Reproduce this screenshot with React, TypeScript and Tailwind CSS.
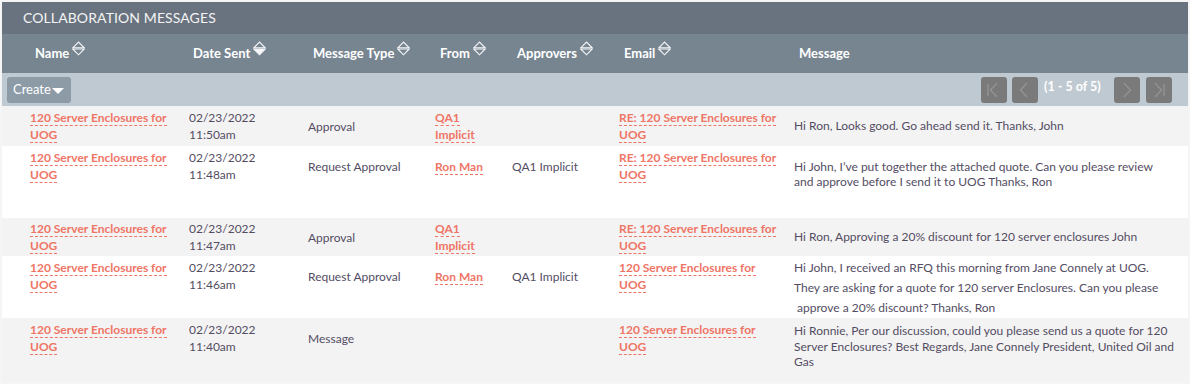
import React from "react";

const LINK = "text-[#ef7566] font-bold border-b border-dashed border-[#ef7566]";

function SortIcon({ desc }: { desc?: boolean }) {
  return (
    <svg
      width="13"
      height="15"
      viewBox="0 0 13 15"
      className="ml-[3px] mb-[10px] shrink-0"
      fill="none"
      stroke="#f4f6f8"
      strokeWidth="1.1"
    >
      <path d="M0.8 6.8 L6.5 1 L12.2 6.8 Z" />
      <path d="M0.8 8 L6.5 13.8 L12.2 8 Z" fill={desc ? "#f4f6f8" : "none"} />
    </svg>
  );
}

function Pager({ kind }: { kind: "first" | "prev" | "next" | "last" }) {
  const d = {
    first: "M7 7 V19 M16 6 L9.5 13 L16 20",
    prev: "M15 6 L8.5 13 L15 20",
    next: "M10 6 L16.5 13 L10 20",
    last: "M9 6 L15.5 13 L9 20 M18 7 V19",
  }[kind];
  return (
    <div className="w-[26px] h-[26px] rounded-[3px] bg-[#7a7a7a] flex items-center justify-center">
      <svg width="26" height="26" viewBox="0 0 26 26" fill="none" stroke="#939393" strokeWidth="1.4">
        <path d={d} />
      </svg>
    </div>
  );
}

function Link({ lines }: { lines: string[] }) {
  return (
    <span className={LINK}>
      {lines.map((l, i) => (
        <React.Fragment key={i}>
          {i > 0 && <br />}
          {l}
        </React.Fragment>
      ))}
    </span>
  );
}

type Row = {
  bg: string;
  h: string;
  box: string;
  time: string;
  type: string;
  from: string[];
  approvers: string;
  email: string[];
  msgCls: string;
  msg: string[];
};

const NAME = ["120 Server Enclosures for", "UOG"];

const rows: Row[] = [
  {
    bg: "bg-[#f3f3f3]",
    h: "h-[40px]",
    box: "h-[40px]",
    time: "11:50am",
    type: "Approval",
    from: ["QA1", "Implicit"],
    approvers: "",
    email: ["RE: 120 Server Enclosures for", "UOG"],
    msgCls: "h-[39px] flex items-center leading-[15px]",
    msg: ["Hi Ron, Looks good. Go ahead send it. Thanks, John"],
  },
  {
    bg: "bg-white",
    h: "h-[72px]",
    box: "h-[40px]",
    time: "11:48am",
    type: "Request Approval",
    from: ["Ron Man"],
    approvers: "QA1 Implicit",
    email: ["RE: 120 Server Enclosures for", "UOG"],
    msgCls: "pt-[13px] leading-[15px]",
    msg: [
      "Hi John, I\u2019ve put together the attached quote. Can you please review",
      "and approve before I send it to UOG Thanks, Ron",
    ],
  },
  {
    bg: "bg-[#f3f3f3]",
    h: "h-[38px]",
    box: "h-[38px]",
    time: "11:47am",
    type: "Approval",
    from: ["QA1", "Implicit"],
    approvers: "",
    email: ["RE: 120 Server Enclosures for", "UOG"],
    msgCls: "h-[37px] flex items-center leading-[15px]",
    msg: ["Hi Ron, Approving a 20% discount for 120 server enclosures John"],
  },
  {
    bg: "bg-white",
    h: "h-[62px]",
    box: "h-[40px]",
    time: "11:46am",
    type: "Request Approval",
    from: ["Ron Man"],
    approvers: "QA1 Implicit",
    email: ["120 Server Enclosures for", "UOG"],
    msgCls: "pt-[2px] leading-[20px]",
    msg: [
      "Hi John, I received an RFQ this morning from Jane Connely at UOG.",
      "They are asking for a quote for 120 server Enclosures. Can you please",
      "\u00a0approve a 20% discount? Thanks, Ron",
    ],
  },
  {
    bg: "bg-[#f3f3f3]",
    h: "h-[64px]",
    box: "h-[40px]",
    time: "11:40am",
    type: "Message",
    from: [],
    approvers: "",
    email: ["120 Server Enclosures for", "UOG"],
    msgCls: "pt-[5px] leading-[15.5px]",
    msg: [
      "Hi Ronnie, Per our discussion, could you please send us a quote for 120",
      "Server Enclosures? Best Regards, Jane Connely President, United Oil and",
      "Gas",
    ],
  },
];

const COLS = "grid grid-cols-[182px_119px_127px_77px_107px_175px_1fr]";

export default function App() {
  return (
    <div className="min-h-screen bg-[#f5f5f5] p-[2px] font-['Lato','Open_Sans',sans-serif] text-[12px] text-[#534d64]">
      <div className="w-[1186px]">
        {/* title */}
        <div className="h-[32px] bg-[#68737f] pl-[21px] pb-[1px] flex items-center text-[14px] text-[#f4f4f4] tracking-[0.1px]">
          COLLABORATION MESSAGES
        </div>

        {/* column headers */}
        <div className={`${COLS} h-[39px] bg-[#778591] text-white text-[13px] font-bold`}>
          <div className="flex items-center pl-[33px]">Name<SortIcon /></div>
          <div className="flex items-center pl-[9px]">Date Sent<SortIcon desc /></div>
          <div className="flex items-center pl-[10px]">Message Type<SortIcon /></div>
          <div className="flex items-center pl-[10px]">From<SortIcon /></div>
          <div className="flex items-center pl-[10px]">Approvers<SortIcon /></div>
          <div className="flex items-center pl-[10px]">Email<SortIcon /></div>
          <div className="flex items-center pl-[10px]">Message</div>
        </div>

        {/* toolbar */}
        <div className="h-[33px] bg-[#bfc9d1] flex items-center justify-between pl-[5px] pr-[16px]">
          <button className="h-[26px] w-[64px] rounded-[3px] bg-[#8d9ba7] text-white text-[13px] flex items-center pl-[6px]">
            Create
            <svg width="12" height="7" viewBox="0 0 12 7" className="ml-[1px] mt-[3px]">
              <path d="M0 0 H12 L6 6 Z" fill="white" />
            </svg>
          </button>
          <div className="flex items-center">
            <Pager kind="first" />
            <div className="ml-[5px]"><Pager kind="prev" /></div>
            <span className="ml-[6px] w-[70px] text-white font-bold text-[12.5px] mb-[5px]">(1 - 5 of 5)</span>
            <Pager kind="next" />
            <div className="ml-[6px]"><Pager kind="last" /></div>
          </div>
        </div>

        {/* rows */}
        {rows.map((r, i) => (
          <div key={i} className={`${COLS} ${r.bg} ${r.h} items-start leading-[17px]`}>
            <div className={`${r.box} flex items-center pl-[28px]`}>
              <div><Link lines={NAME} /></div>
            </div>
            <div className={`${r.box} flex items-center pl-[5px]`}>
              <div>02/23/2022<br />{r.time}</div>
            </div>
            <div className={`${r.box} flex items-center pl-[5px]`}>{r.type}</div>
            <div className={`${r.box} flex items-center pl-[5px]`}>
              {r.from.length > 0 && <div><Link lines={r.from} /></div>}
            </div>
            <div className={`${r.box} flex items-center pl-[5px]`}>{r.approvers}</div>
            <div className={`${r.box} flex items-center pl-[5px]`}>
              <div><Link lines={r.email} /></div>
            </div>
            <div className={`${r.msgCls} pl-[5px]`}>
              <div>
                {r.msg.map((m, j) => (
                  <div key={j}>{m}</div>
                ))}
              </div>
            </div>
          </div>
        ))}
      </div>
    </div>
  );
}
